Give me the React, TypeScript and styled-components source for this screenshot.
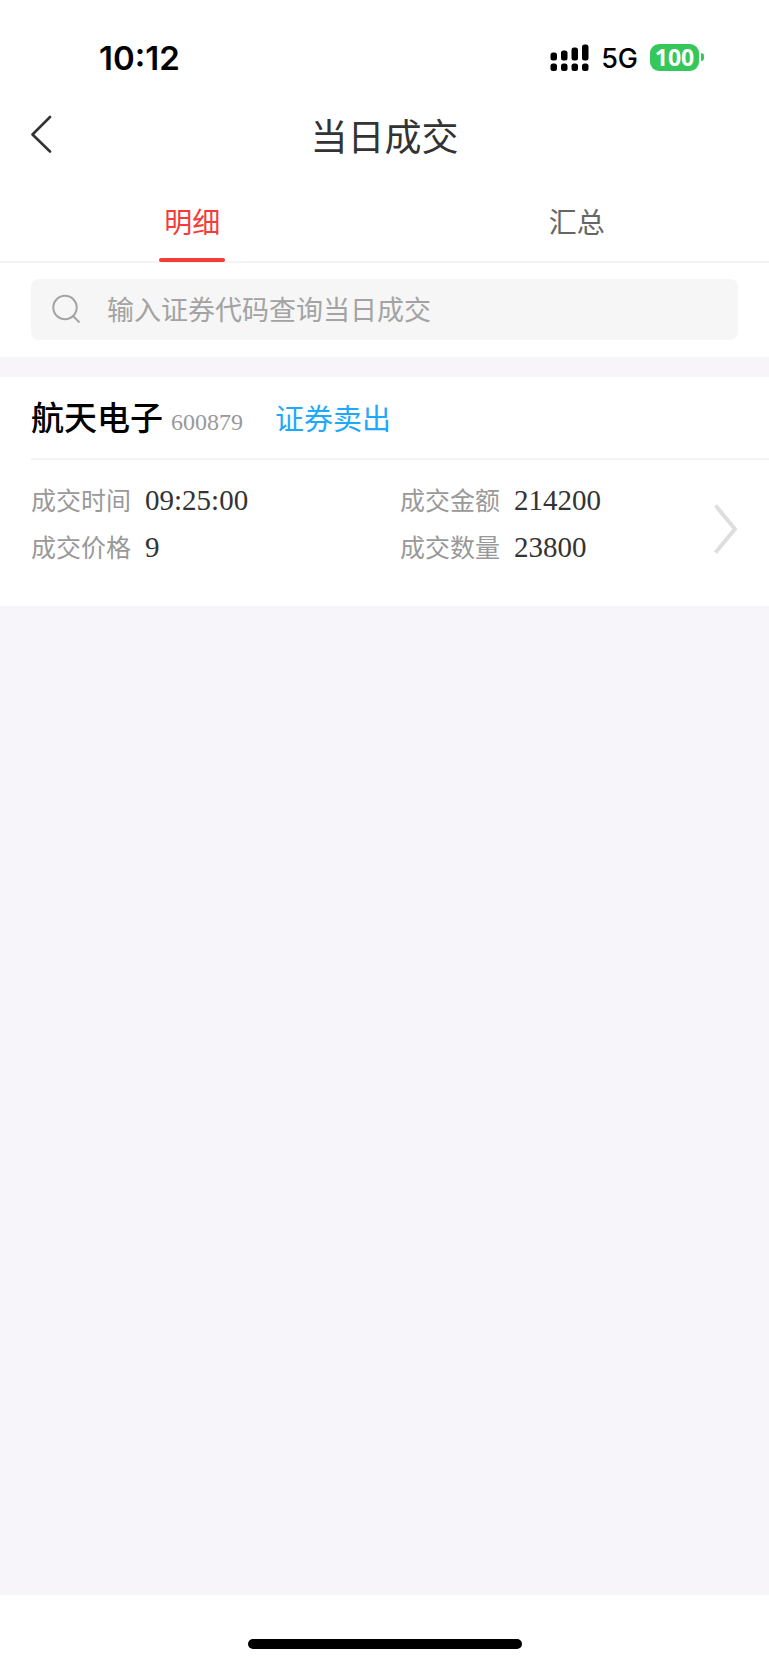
import React, { useState } from "react";
import styled, { createGlobalStyle } from "styled-components";

const GlobalStyle = createGlobalStyle`
  *, *::before, *::after { box-sizing: border-box; }
  body {
    margin: 0;
    background: #fff;
    color: #333;
    font-family: "Noto Sans CJK SC", sans-serif;
  }
  h1, h2, dl, dd, dt { margin: 0; }
`;

const Screen = styled.div`
  min-height: 100vh;
  display: flex;
  flex-direction: column;
`;

const StatusBar = styled.div`
  display: flex;
  align-items: center;
  justify-content: space-between;
  height: 90px;
  padding: 24px 65px 0 99px;
  color: #000;
  font-family: Inter, sans-serif;
  line-height: 40px;
`;

const Clock = styled.time`
  padding-top: 2px;
  font-size: 33px;
  font-weight: 600;
`;

const StatusIcons = styled.div`
  display: flex;
  align-items: center;
`;

const Network = styled.span`
  margin: 0 12px;
  padding-top: 4px;
  font-size: 27px;
  font-weight: 500;
`;

const Battery = styled.span`
  width: 49px;
  height: 27px;
  border-radius: 9px;
  background: #34c759;
  color: #fff;
  font-family: "Noto Sans", sans-serif;
  font-size: 23px;
  font-weight: 700;
  line-height: 26px;
  text-align: center;
`;

const BatteryTip = styled.span`
  width: 3px;
  height: 8px;
  margin-left: 2px;
  border-radius: 0 4px 4px 0;
  background: #34c759;
`;

const TitleBar = styled.header`
  display: grid;
  grid-template-columns: 1fr auto 1fr;
  align-items: center;
  height: 90px;
  padding: 0 31px;
`;

const BackButton = styled.button`
  justify-self: start;
  display: flex;
  padding: 0 0 2px;
  border: 0;
  background: none;
  color: #333;
`;

const Title = styled.h1`
  font-size: 37px;
  font-weight: 400;
  line-height: 48px;
`;

const Tabs = styled.div`
  display: flex;
  border-bottom: 2px solid #f3f3f4;
`;

const Tab = styled.button<{ $active: boolean }>`
  flex: 1;
  display: flex;
  flex-direction: column;
  align-items: center;
  height: 83px;
  margin-bottom: -2px;
  padding: 21px 0 0;
  border: 0;
  background: none;
  color: ${(p) => (p.$active ? "#f43c39" : "#666")};
  font: 400 28px/40px "Noto Sans CJK SC", sans-serif;

  &::after {
    content: "";
    width: 66px;
    height: 4px;
    margin-top: 17px;
    border-radius: 2px;
    background: ${(p) => (p.$active ? "#f43c39" : "transparent")};
  }
`;

const SearchArea = styled.div`
  padding: 16px 31px 17px;
`;

const SearchBox = styled.label`
  display: flex;
  align-items: center;
  gap: 26px;
  height: 61px;
  padding: 0 20px 2px;
  border-radius: 8px;
  background: #f6f6f6;
  color: #a3a3a3;
`;

const SearchInput = styled.input`
  flex: 1;
  min-width: 0;
  padding: 0;
  border: 0;
  outline: 0;
  background: none;
  color: #333;
  font: 400 27px/40px "Noto Sans CJK SC", sans-serif;

  &::placeholder { color: #a3a3a3; opacity: 1; }
`;

const List = styled.main`
  flex: 1;
  padding-top: 20px;
  background: #f7f5f9;
`;

const Card = styled.a`
  display: block;
  padding-left: 31px;
  background: #fff;
  color: inherit;
  text-decoration: none;
`;

const CardHead = styled.div`
  display: flex;
  align-items: baseline;
  height: 83px;
  padding-top: 15px;
  border-bottom: 2px solid #f3f3f4;
  line-height: 48px;
`;

const StockName = styled.h2`
  color: #000;
  font-size: 33px;
  font-weight: 500;
`;

const StockCode = styled.span`
  margin: 0 32px 0 8px;
  color: #999;
  font-family: "Liberation Serif", serif;
  font-size: 24px;
`;

const Side = styled.span`
  color: #1fa9fc;
  font-size: 29px;
`;

const CardBody = styled.div`
  display: flex;
  padding: 16px 0 24px;
`;

const Column = styled.div`
  flex: 1;
  display: flex;
  align-items: center;
  justify-content: space-between;
  padding-right: 31px;
`;

const FieldList = styled.dl`
  padding-bottom: 12px;
`;

const Field = styled.div`
  display: flex;
  align-items: baseline;
  gap: 14px;
  height: 47px;
  line-height: 47px;

  dt {
    color: #999;
    font-size: 25px;
  }
  dd {
    color: #333;
    font-family: "Liberation Serif", serif;
    font-size: 29px;
  }
`;

const HomeArea = styled.footer`
  display: flex;
  justify-content: center;
  height: 70px;
  padding-top: 44px;
`;

const HomeBar = styled.div`
  width: 274px;
  height: 10px;
  border-radius: 5px;
  background: #000;
`;

const SignalIcon = () => (
  <svg width="39" height="27" viewBox="0 0 39 27" aria-hidden="true">
    <rect x="0.5" y="8.5" width="6.5" height="8" rx="2.5" />
    <rect x="11" y="6.5" width="6.5" height="10" rx="2.5" />
    <rect x="21.5" y="3.5" width="6.5" height="13" rx="2.5" />
    <rect x="32" y="0.5" width="6.5" height="16" rx="2.5" />
    <rect x="0.5" y="19.5" width="6.5" height="7.500" rx="2.5" />
    <rect x="11" y="19.5" width="6.5" height="7.500" rx="2.5" />
    <rect x="21.5" y="19.5" width="6.5" height="7.500" rx="2.5" />
    <rect x="32" y="19.5" width="6.5" height="7.500" rx="2.5" />
  </svg>
);

const BackIcon = () => (
  <svg width="22" height="38" viewBox="0 0 22 38" fill="none" stroke="currentColor" strokeWidth="2.600" strokeLinecap="round" strokeLinejoin="round">
    <path d="M19 2 1.500 19.500 19 36.500" />
  </svg>
);

const SearchIcon = () => (
  <svg width="30" height="30" viewBox="0 0 30 30" fill="none" stroke="currentColor" strokeWidth="2" aria-hidden="true">
    <circle cx="14" cy="13.500" r="11.700" />
    <path d="m22 22 6.500 6.500" />
  </svg>
);

const MoreIcon = () => (
  <svg width="24" height="50" viewBox="0 0 24 50" fill="none" stroke="#dedede" strokeWidth="4" strokeLinejoin="round" aria-hidden="true">
    <path d="M1.500 1.500 21 25 1.500 48.500" />
  </svg>
);

const tabs = ["明细", "汇总"];

const trade = {
  name: "航天电子",
  code: "600879",
  side: "证券卖出",
  left: [["成交时间", "09:25:00"], ["成交价格", "9"]],
  right: [["成交金额", "214200"], ["成交数量", "23800"]],
};

const Fields = ({ items }: { items: string[][] }) => (
  <FieldList>
    {items.map(([label, value]) => (
      <Field key={label}>
        <dt>{label}</dt>
        <dd>{value}</dd>
      </Field>
    ))}
  </FieldList>
);

export default function App() {
  const [active, setActive] = useState(0);
  return (
    <Screen>
      <GlobalStyle />
      <StatusBar>
        <Clock>10:12</Clock>
        <StatusIcons>
          <SignalIcon />
          <Network>5G</Network>
          <Battery>100</Battery>
          <BatteryTip />
        </StatusIcons>
      </StatusBar>
      <TitleBar>
        <BackButton type="button" aria-label="返回">
          <BackIcon />
        </BackButton>
        <Title>当日成交</Title>
      </TitleBar>
      <Tabs role="tablist">
        {tabs.map((tab, i) => (
          <Tab key={tab} type="button" role="tab" aria-selected={active === i} $active={active === i} onClick={() => setActive(i)}>
            {tab}
          </Tab>
        ))}
      </Tabs>
      <SearchArea>
        <SearchBox>
          <SearchIcon />
          <SearchInput type="text" aria-label="输入证券代码查询当日成交" placeholder="输入证券代码查询当日成交" />
        </SearchBox>
      </SearchArea>
      <List>
        <Card href="#detail">
          <CardHead>
            <StockName>{trade.name}</StockName>
            <StockCode>{trade.code}</StockCode>
            <Side>{trade.side}</Side>
          </CardHead>
          <CardBody>
            <Column>
              <Fields items={trade.left} />
            </Column>
            <Column>
              <Fields items={trade.right} />
              <MoreIcon />
            </Column>
          </CardBody>
        </Card>
      </List>
      <HomeArea>
        <HomeBar />
      </HomeArea>
    </Screen>
  );
}
